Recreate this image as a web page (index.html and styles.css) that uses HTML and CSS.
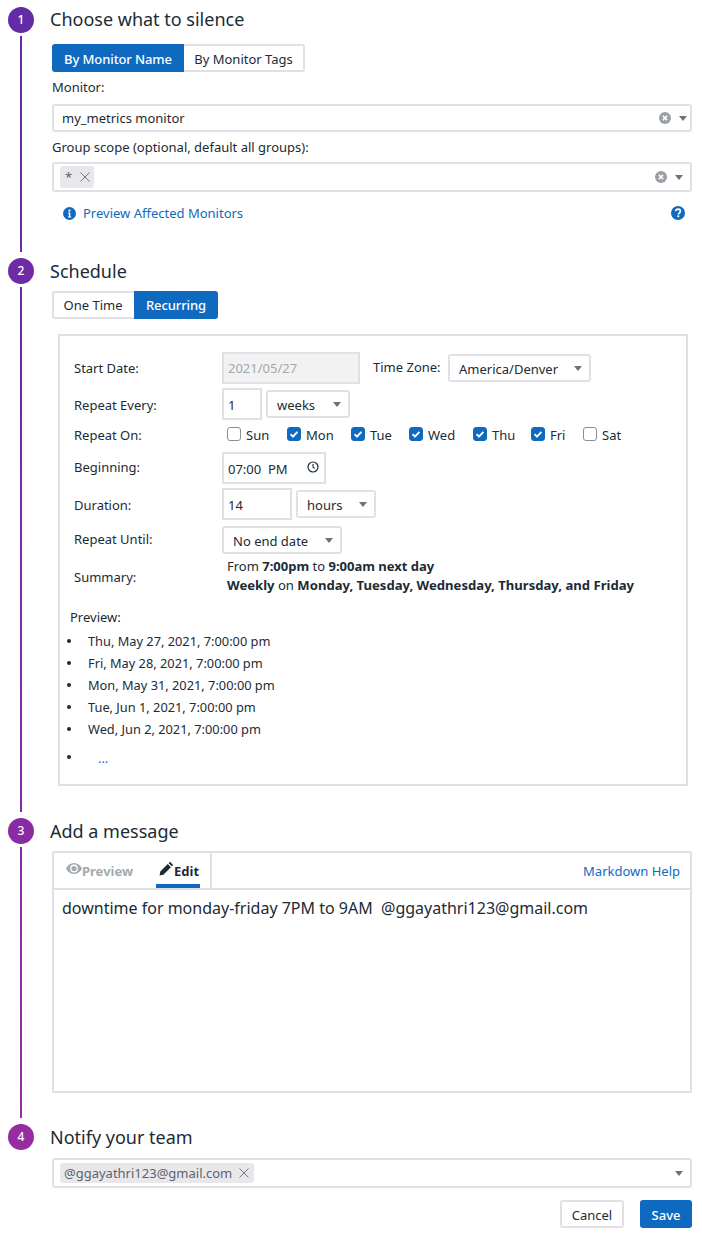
FILE: index.html
```html
<!DOCTYPE html>
<html lang="en">
<head>
<meta charset="utf-8">
<title>Silence monitor</title>
<link rel="stylesheet" href="styles.css">
</head>
<body>
<main class="form">
  <section class="step step-1">
    <div class="rail"><span class="num n1">1</span><span class="line l1"></span></div>
    <div class="content">
      <h2>Choose what to silence</h2>
      <div class="seg seg-a"><span class="seg-btn on w-name">By Monitor Name</span><span class="seg-btn w-tags">By Monitor Tags</span></div>
      <label class="field-label lab-monitor">Monitor:</label>
      <div class="combo h-28"><span class="val">my_metrics monitor</span>
        <svg class="clear" viewBox="0 0 12 12"><circle cx="6" cy="6" r="6" fill="#9aa0a6"/><path d="M3.900 3.900l4.200 4.200M8.100 3.900l-4.200 4.200" stroke="#fff" stroke-width="1.500"/></svg><i class="caret"></i></div>
      <label class="field-label lab-group">Group scope (optional, default all groups):</label>
      <div class="combo h-30 shift"><span class="chip chip-star">* <svg class="x" viewBox="0 0 10 10"><path d="M0.5 0.5l9 9M9.5 0.5l-9 9"/></svg></span>
        <svg class="clear" viewBox="0 0 12 12"><circle cx="6" cy="6" r="6" fill="#9aa0a6"/><path d="M3.900 3.900l4.200 4.200M8.100 3.900l-4.200 4.200" stroke="#fff" stroke-width="1.500"/></svg><i class="caret"></i></div>
      <div class="links">
        <a class="link"><svg class="info" viewBox="0 0 14 14"><circle cx="7" cy="7" r="7" fill="#0f6abf"/><circle cx="7" cy="3.8" r="1.2" fill="#fff"/><path d="M5.4 6h2.5v4.2h1v1.1H5.3v-1.1h1V7.1h-.9z" fill="#fff"/></svg>Preview Affected Monitors</a>
        <svg class="help" viewBox="0 0 14 14"><circle cx="7" cy="7" r="7" fill="#0f6abf"/><path d="M4.7 5.2C4.9 3.9 5.9 3.2 7.1 3.2c1.3 0 2.3.8 2.3 2 0 1.900-2 1.800-2 3.200" fill="none" stroke="#fff" stroke-width="1.700"/><rect x="6.300" y="9.400" width="2" height="1.800" fill="#fff"/></svg>
      </div>
    </div>
  </section>

  <section class="step step-2">
    <div class="rail"><span class="num n2">2</span><span class="line l2"></span></div>
    <div class="content">
      <h2>Schedule</h2>
      <div class="seg seg-b"><span class="seg-btn w-one">One Time</span><span class="seg-btn on w-rec">Recurring</span></div>
      <div class="panel">
        <div class="row r-start"><span class="rl">Start Date:</span><span class="input disabled w-138">2021/05/27</span><span class="tz-label">Time Zone:</span><span class="select w-143">America/Denver<i class="caret"></i></span></div>
        <div class="row r-every"><span class="rl">Repeat Every:</span><span class="input w-40">1</span><span class="select w-84">weeks<i class="caret"></i></span></div>
        <div class="row r-on"><span class="rl">Repeat On:</span>
          <div class="days">
            <span class="day d-sun"><i class="box"></i>Sun</span>
            <span class="day d-mon"><i class="box on"><svg viewBox="0 0 14 14"><path d="M3 7.200l2.800 2.800L11 4.600"/></svg></i>Mon</span>
            <span class="day d-tue"><i class="box on"><svg viewBox="0 0 14 14"><path d="M3 7.200l2.800 2.800L11 4.600"/></svg></i>Tue</span>
            <span class="day d-wed"><i class="box on"><svg viewBox="0 0 14 14"><path d="M3 7.200l2.800 2.800L11 4.600"/></svg></i>Wed</span>
            <span class="day d-thu"><i class="box on"><svg viewBox="0 0 14 14"><path d="M3 7.200l2.800 2.800L11 4.600"/></svg></i>Thu</span>
            <span class="day d-fri"><i class="box on"><svg viewBox="0 0 14 14"><path d="M3 7.200l2.800 2.800L11 4.600"/></svg></i>Fri</span>
            <span class="day"><i class="box"></i>Sat</span>
          </div>
        </div>
        <div class="row r-begin"><span class="rl">Beginning:</span><span class="input w-104 time">07:00&nbsp; PM<svg class="clock" viewBox="0 0 12 12"><circle cx="6" cy="6" r="5" fill="none" stroke="#1c2b34" stroke-width="1.200"/><path d="M6 3v3.200l2 1.200" fill="none" stroke="#1c2b34" stroke-width="1.100"/></svg></span></div>
        <div class="row r-dur"><span class="rl">Duration:</span><span class="input w-70">14</span><span class="select w-80">hours<i class="caret"></i></span></div>
        <div class="row r-until"><span class="rl rl-until">Repeat Until:</span><span class="select w-120">No end date<i class="caret"></i></span></div>
        <div class="row r-sum"><span class="rl">Summary:</span>
          <div class="sum"><div>From <b>7:00pm</b> to <b>9:00am next day</b></div><div class="sum-2"><b>Weekly</b> on <b>Monday, Tuesday, Wednesday, Thursday, and Friday</b></div></div>
        </div>
        <div class="pv-label">Preview:</div>
        <ul class="pv">
          <li>Thu, May 27, 2021, 7:00:00 pm</li>
          <li>Fri, May 28, 2021, 7:00:00 pm</li>
          <li>Mon, May 31, 2021, 7:00:00 pm</li>
          <li>Tue, Jun 1, 2021, 7:00:00 pm</li>
          <li>Wed, Jun 2, 2021, 7:00:00 pm</li>
          <li class="more"><a>...</a></li>
        </ul>
      </div>
    </div>
  </section>

  <section class="step step-3">
    <div class="rail"><span class="num n3">3</span><span class="line l3"></span></div>
    <div class="content">
      <h2>Add a message</h2>
      <div class="editor">
        <div class="tabs">
          <div class="tab-group">
            <span class="tab t-prev"><svg class="eye" viewBox="0 0 16 11"><path d="M8 0C4.500 0 1.600 2.200 0 5.500 1.600 8.800 4.500 11 8 11s6.400-2.200 8-5.500C14.400 2.200 11.500 0 8 0zm0 9.400a3.900 3.900 0 1 1 0-7.800 3.900 3.900 0 0 1 0 7.800z" fill="#a4a9ae"/><circle cx="8" cy="5.500" r="2.600" fill="#a4a9ae"/></svg>Preview</span>
            <span class="tab t-edit"><svg class="pen" viewBox="0 0 14 14"><path d="M10.300.8l2.900 2.900-1.300 1.300L9 2.100zM8.200 2.900l2.900 2.900-7 7-3.600.7.700-3.600z" fill="#1c2b34"/></svg>Edit</span>
          </div>
          <a class="md">Markdown Help</a>
        </div>
        <div class="msg">downtime for monday-friday 7PM to 9AM&nbsp; @ggayathri123@gmail.com</div>
      </div>
    </div>
  </section>

  <section class="step step-4">
    <div class="rail"><span class="num n4">4</span></div>
    <div class="content">
      <h2>Notify your team</h2>
      <div class="combo h-30 notify"><span class="chip chip-mail">@ggayathri123@gmail.com <svg class="x" viewBox="0 0 10 10"><path d="M0.500 0.500l9 9M9.500 0.500l-9 9"/></svg></span><i class="caret"></i></div>
      <div class="actions"><button class="btn">Cancel</button><button class="btn primary">Save</button></div>
    </div>
  </section>
</main>
</body>
</html>
```
FILE: styles.css
```css
* { box-sizing: border-box; }
html, body { margin: 0; padding: 0; background: #fff; }
body { font-family: "Noto Sans", sans-serif; font-size: 13px; line-height: 18px; color: #1c2b34; width: 702px; height: 1240px; overflow: hidden; }
.form { padding: 7px 10px 0 8px; }
.step { display: flex; }
.step-1 { height: 251px; }
.step-2 { height: 560px; }
.step-3 { height: 306px; }
.rail { width: 26px; flex: none; display: flex; flex-direction: column; align-items: center; }
.num { width: 26px; height: 26px; border-radius: 50%; color: #fff; font-size: 12px; line-height: 26px; text-align: center; flex: none; font-weight: 500; }
.n1 { background: #632ca6; }
.n2 { background: #6f2ba5; }
.n3 { background: #8a2ba3; }
.n4 { background: #962ba2; }
.line { width: 2px; flex: 1; margin: 3px 0 6px; }
.l1 { background: linear-gradient(#632ca6, #6a2ca5); }
.l2 { background: linear-gradient(#6a2ca5, #872ba3); }
.l3 { background: linear-gradient(#872ba3, #962ba2); }
.content { margin-left: 16px; width: 642px; position: relative; }
h2 { margin: 0; font-size: 18px; line-height: 26px; font-weight: 400; height: 26px; }
.step-1 h2 { margin-top: -1px; }
.seg { display: flex; margin-left: 2px; height: 28px; }
.seg-a { margin-top: 12px; }
.seg-a .seg-btn { padding-top: 2px; }
.seg-b { margin-top: 7px; }
.seg-btn { border: 2px solid #e0e0e6; background: #fff; display: flex; align-items: center; justify-content: center; font-size: 13px; }
.seg-btn:first-child { border-radius: 3px 0 0 3px; }
.seg-btn:last-child { border-radius: 0 3px 3px 0; }
.seg-btn.on { background: #0f6abf; border-color: #0f6abf; color: #fff; font-weight: 500; letter-spacing: -0.1px; }
.w-name { width: 132px; }
.w-tags { width: 121px; border-left: 0; }
.w-one { width: 82px; border-right: 0; padding-right: 2px; }
.w-rec { width: 84px; }
.field-label { display: block; margin-left: 2px; }
.lab-monitor { margin-top: 6px; }
.lab-group { margin-top: 6px; }
.combo { margin: 0 0 0 2px; width: 640px; border: 2px solid #e0e0e6; border-radius: 3px; display: flex; align-items: center; padding: 0 3px 0 8px; }
.h-28 { height: 28px; margin-top: 8px; }
.h-30 { height: 30px; }
.shift { margin-top: 6px; padding: 0 7px 0 6px; }
.val { flex: 1; }
.clear { width: 12px; height: 12px; margin-right: 8px; }
.caret { display: inline-block; width: 0; height: 0; border-left: 4px solid transparent; border-right: 4px solid transparent; border-top: 5px solid #6b7378; }
.chip { display: inline-flex; align-items: center; height: 20px; background: #e8e8eb; border-radius: 3px; color: #5b646b; padding: 0 5px 0 4px; margin-right: auto; }
.x { width: 10px; height: 10px; margin-left: 7px; flex: none; }
.x path { stroke: #73797f; stroke-width: 1; fill: none; }
.chip-star { width: 34px; height: 22px; padding-left: 5px; }
.chip-star .x { margin-left: 8px; }
.links { display: flex; justify-content: space-between; align-items: center; margin: 12px 7px 0 13px; height: 18px; }
.link { color: #0f6abf; display: flex; align-items: center; }
.info { width: 13px; height: 13px; margin-right: 7px; }
.help { width: 14px; height: 14px; margin-top: -1px; }
.panel { margin: 15px 4px 0 8px; height: 452px; border: 2px solid #e0e0e6; padding: 16px 14px 0 14px; width: 630px; }
.row { display: flex; align-items: center; }
.rl { width: 148px; flex: none; }
.r-every .rl, .r-on .rl, .r-dur .rl, .r-until .rl { padding-top: 2px; }
.r-start .rl { margin-top: -1px; }
.r-begin .rl { margin-top: -2px; }
.r-start { height: 32px; }
.r-every { height: 32px; margin-top: 4px; }
.r-on { height: 28px; }
.r-begin { height: 32px; margin-top: 4px; }
.r-dur { height: 32px; margin-top: 4px; }
.r-until { height: 28px; margin-top: 6px; }
.rl-until { position: relative; top: -2px; }
.r-sum { height: 38px; margin-top: 4px; }
.input { height: 32px; border: 2px solid #e0e0e6; display: flex; align-items: center; padding: 2px 4px 0; flex: none; }
.disabled { background: #f2f2f2; color: #a4a8ac; padding-top: 0; }
.w-138 { width: 138px; }
.w-40 { width: 40px; }
.w-104 { width: 104px; }
.w-70 { width: 70px; }
.select { height: 28px; border: 2px solid #e0e0e6; border-radius: 3px; display: flex; align-items: center; justify-content: space-between; padding: 2px 7px 0 9px; flex: none; }
.select .caret { margin-top: -2px; }
.w-143 { width: 143px; }
.w-84 { width: 84px; margin-left: 4px; }
.w-80 { width: 80px; margin-left: 4px; }
.w-120 { width: 120px; }
.tz-label { margin-left: 13px; width: 75px; position: relative; top: -1px; }
.days { display: flex; margin-left: 5px; }
.day { display: flex; align-items: center; padding-top: 2px; }
.box { display: block; width: 14px; height: 14px; border: 1px solid #8a8f94; border-radius: 3px; margin: -2px 5px 0 0; background: #fff; }
.box.on { background: #0f6abf; border-color: #0f6abf; }
.box svg { display: block; width: 12px; height: 12px; }
.box path { fill: none; stroke: #fff; stroke-width: 2.200; }
.d-sun { width: 60px; }
.d-mon { width: 64px; }
.d-tue { width: 58px; }
.d-wed { width: 64px; }
.d-thu { width: 58px; }
.d-fri { width: 52px; }
.time { justify-content: space-between; padding-right: 5px; }
.clock { width: 12px; height: 12px; margin-top: -5px; }
.sum { margin: -2px 0 0 5px; line-height: 19px; }
.sum b { font-weight: 700; }
.sum-2 { font-size: 13.1px; }
.pv-label { margin: 12px 0 0 -4px; }
.pv { margin: 4px 0 0 -14px; padding: 0 0 0 28px; list-style: none; font-size: 12.8px; }
.pv li { height: 22px; line-height: 22px; position: relative; }
.pv li::before { content: ""; position: absolute; left: -21px; top: 9px; width: 4px; height: 4px; border-radius: 50%; background: #1c2b34; }
.pv .more { height: 36px; line-height: 36px; padding-left: 10px; color: #0f6abf; }
.pv .more::before { top: 15px; }
.editor { margin: 7px 0 0 2px; width: 640px; height: 242px; border: 2px solid #e0e0e6; border-radius: 3px 3px 0 0; }
.tabs { display: flex; justify-content: space-between; height: 37px; border-bottom: 2px solid #e0e0e6; }
.tab-group { display: flex; width: 158px; border-right: 2px solid #e0e0e6; }
.tab { display: flex; align-items: center; font-size: 13px; font-weight: 700; height: 35px; position: relative; padding-top: 1px; }
.t-prev { color: #a4a9ae; margin-left: 12px; width: 90px; }
.t-edit { width: 44px; padding-left: 3px; }
.t-edit::after { content: ""; position: absolute; left: 0; right: 0; bottom: 0; height: 4px; background: #0f6abf; }
.eye { width: 16px; height: 11px; margin-top: -6px; }
.pen { width: 15px; height: 15px; margin-top: -5px; }
.md { color: #0f6abf; align-self: center; margin-right: 10px; }
.msg { padding: 7px 8px; font-size: 16px; line-height: 22px; }
.notify { margin-top: 8px; padding: 0 7px 0 6px; }
.chip-mail { padding: 0 5px 0 4px; }
.actions { display: flex; justify-content: flex-end; gap: 16px; margin-top: 12px; }
.btn { font: inherit; height: 28px; width: 64px; padding: 2px 0 0; background: #fff; color: #1c2b34; border: 2px solid #e0e0e6; border-radius: 3px; }
.primary { width: 52px; background: #0f6abf; border-color: #0f6abf; color: #fff; font-weight: 500; }
```
